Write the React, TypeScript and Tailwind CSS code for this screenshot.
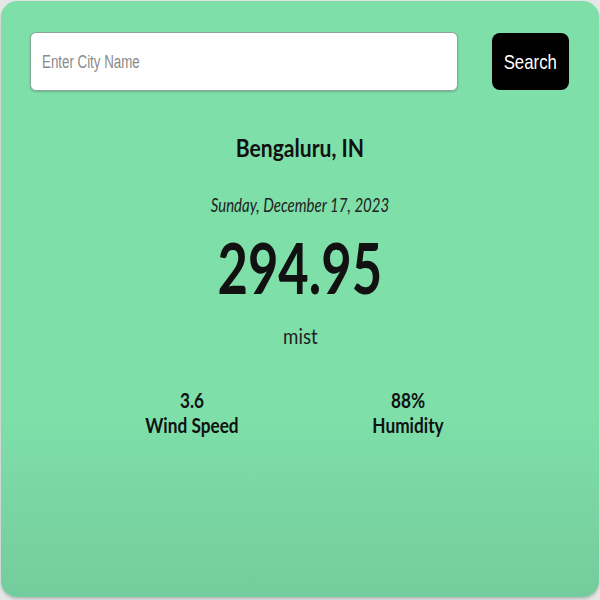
import React, { useState } from 'react';

export default function App() {
  const [city, setCity] = useState('');

  return (
    <div className="w-[600px] h-[600px] bg-[#e4e7e5] p-[1px] pb-[3px]">
      <div className="h-full rounded-[16px] bg-gradient-to-b from-[#7edfa9] from-70% to-[#74cc9c] shadow-[0_2px_3px_rgba(0,0,0,0.2)] flex flex-col items-center">
        <div className="w-full flex items-center pl-[29px] pr-[30px] pt-[31px]">
          <div className="relative w-[428px] h-[59px]">
            <input
              value={city}
              onChange={(e) => setCity(e.target.value)}
              aria-label="Enter City Name"
              className="w-full h-full rounded-[6px] bg-white border border-[#8aa897] px-[12px] text-[18px] text-black outline-none font-['Liberation_Sans',sans-serif] shadow-[0_1px_2px_rgba(0,0,0,0.2)]"
            />
            {!city && (
              <span className="pointer-events-none absolute left-[12px] top-1/2 -translate-y-1/2 origin-left scale-x-[0.74] text-[18px] text-[#8a8a8a] whitespace-nowrap font-['Liberation_Sans',sans-serif]">
                Enter City Name
              </span>
            )}
          </div>
          <button className="ml-auto w-[77px] h-[57px] rounded-[8px] bg-black text-white text-[21px] font-['Liberation_Sans',sans-serif] flex items-center justify-center">
            <span className="scale-x-[0.8]">Search</span>
          </button>
        </div>

        <div className="flex flex-col items-center font-['Lato',sans-serif] text-[#111]">
          <div className="mt-[40px] text-[24px] font-bold leading-[34px] scale-x-[0.88]">Bengaluru, IN</div>
          <div className="mt-[26px] text-[19px] italic leading-[28px] text-[#222] scale-x-[0.79]">Sunday, December 17, 2023</div>
          <div className="mt-[8px] text-[70px] font-bold leading-[80px] scale-x-[0.75]">294.95</div>
          <div className="mt-[14px] text-[22px] leading-[30px] text-[#222] scale-x-[0.85]">mist</div>
        </div>

        <div className="mt-[36px] flex gap-[120px] font-['Lato',sans-serif] text-[#111] text-[21px] font-bold leading-[25px]">
          <div className="flex flex-col items-center w-[96px] scale-x-[0.82]">
            <span>3.6</span>
            <span className="whitespace-nowrap">Wind Speed</span>
          </div>
          <div className="flex flex-col items-center w-[96px] scale-x-[0.82]">
            <span>88%</span>
            <span>Humidity</span>
          </div>
        </div>
      </div>
    </div>
  );
}
